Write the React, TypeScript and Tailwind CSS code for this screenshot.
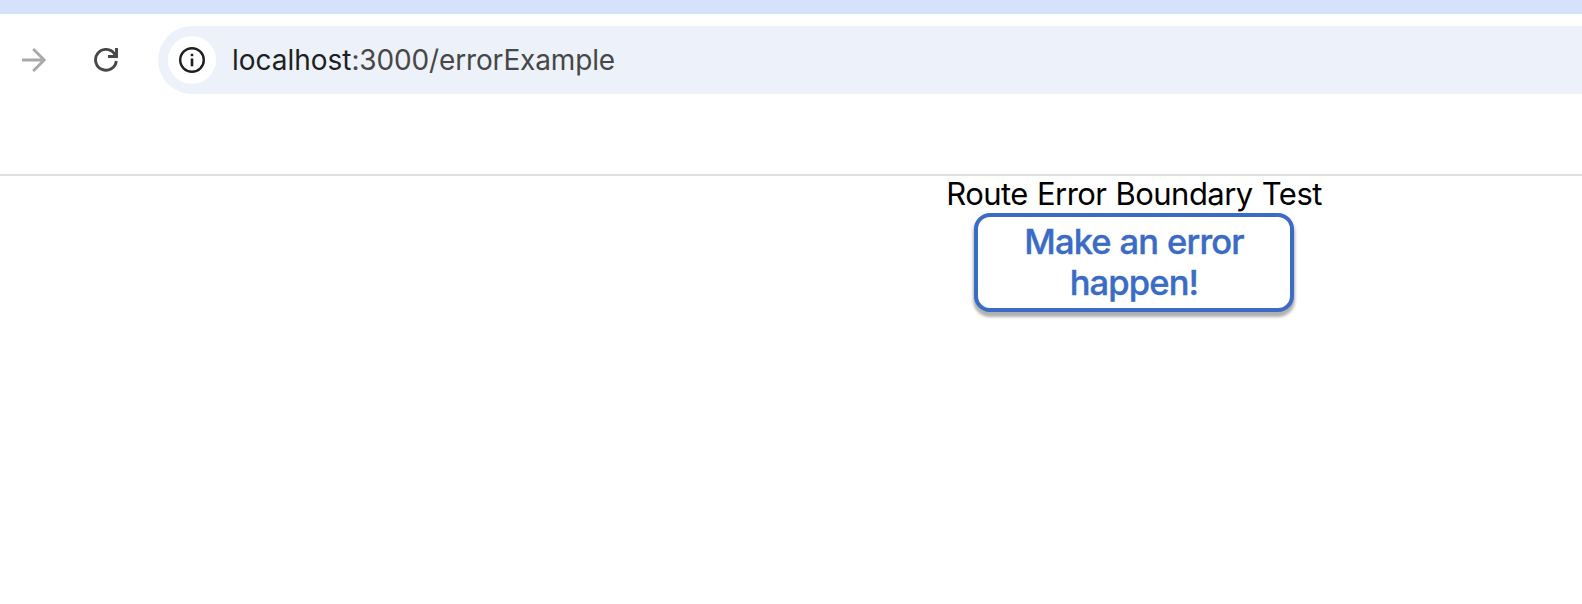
function ForwardIcon() {
  return (
    <svg className="h-6 w-6" viewBox="0 0 24 24" fill="none" stroke="#a9a9a9" strokeWidth="2.9">
      <path d="M0 12H22M11.2 1L22.2 12L11.2 23" />
    </svg>
  );
}

function ReloadIcon() {
  return (
    <svg className="h-6 w-6" viewBox="0 0 24 24" fill="none" stroke="#474747" strokeWidth="2.9">
      <path d="M22.3 13A10.4 10.4 0 1 1 20.3 5.6L22.2 8.2" />
      <path d="M22.5 0V8.5H14" />
    </svg>
  );
}

function InfoIcon() {
  return (
    <svg className="h-[26px] w-[26px]" viewBox="0 0 26 26" fill="none" stroke="#1f1f1f">
      <circle cx="13" cy="13" r="11.8" strokeWidth="2.4" />
      <path d="M13 11.5V19.3" strokeWidth="2.6" />
      <path d="M13 6.8V9.2" strokeWidth="2.6" />
    </svg>
  );
}

function Toolbar() {
  return (
    <div className="flex h-20 items-center pl-[22px] pt-3 pb-0">
      <div className="flex h-[68px] w-full items-center">
        <ForwardIcon />
        <div className="w-12 shrink-0" />
        <ReloadIcon />
        <div className="ml-10 flex h-[68px] flex-1 items-center rounded-l-full bg-[#edf2fa] pl-[10px]">
          <div className="flex h-12 w-12 items-center justify-center rounded-full bg-white">
            <InfoIcon />
          </div>
          <div className="ml-4 whitespace-nowrap text-[28px] leading-8 tracking-[-0.15px] text-[#474747]">
            <span className="tracking-[-0.02px] text-[#1f1f1f]">localhost</span>:3000/errorExample
          </div>
        </div>
      </div>
    </div>
  );
}

export default function App() {
  return (
    <div className="h-[604px] w-full overflow-hidden bg-white font-['Inter',sans-serif]">
      <div className="h-[14px] bg-[#d6e2fb]" />
      <Toolbar />
      <div className="h-[82px] border-b-2 border-[#e0e0e0]" />
      <main className="ml-[686px] flex flex-col items-center">
        <div className="h-[37px] whitespace-nowrap text-[31px] leading-[35px] tracking-[-0.55px] text-black [word-spacing:1px]">
          Route Error Boundary Test
        </div>
        <button className="h-[99px] w-80 rounded-2xl border-4 border-[#3a6bc5] bg-white pb-0.5 text-[34.5px] font-medium leading-[41px] tracking-[-0.85px] text-[#3a6bc5] shadow-[0_4px_3px_1px_rgba(0,0,0,0.31)] [-webkit-text-stroke:0.4px_#3a6bc5] [word-spacing:0.5px]">
          Make an error
          <br />
          happen!
        </button>
      </main>
    </div>
  );
}
